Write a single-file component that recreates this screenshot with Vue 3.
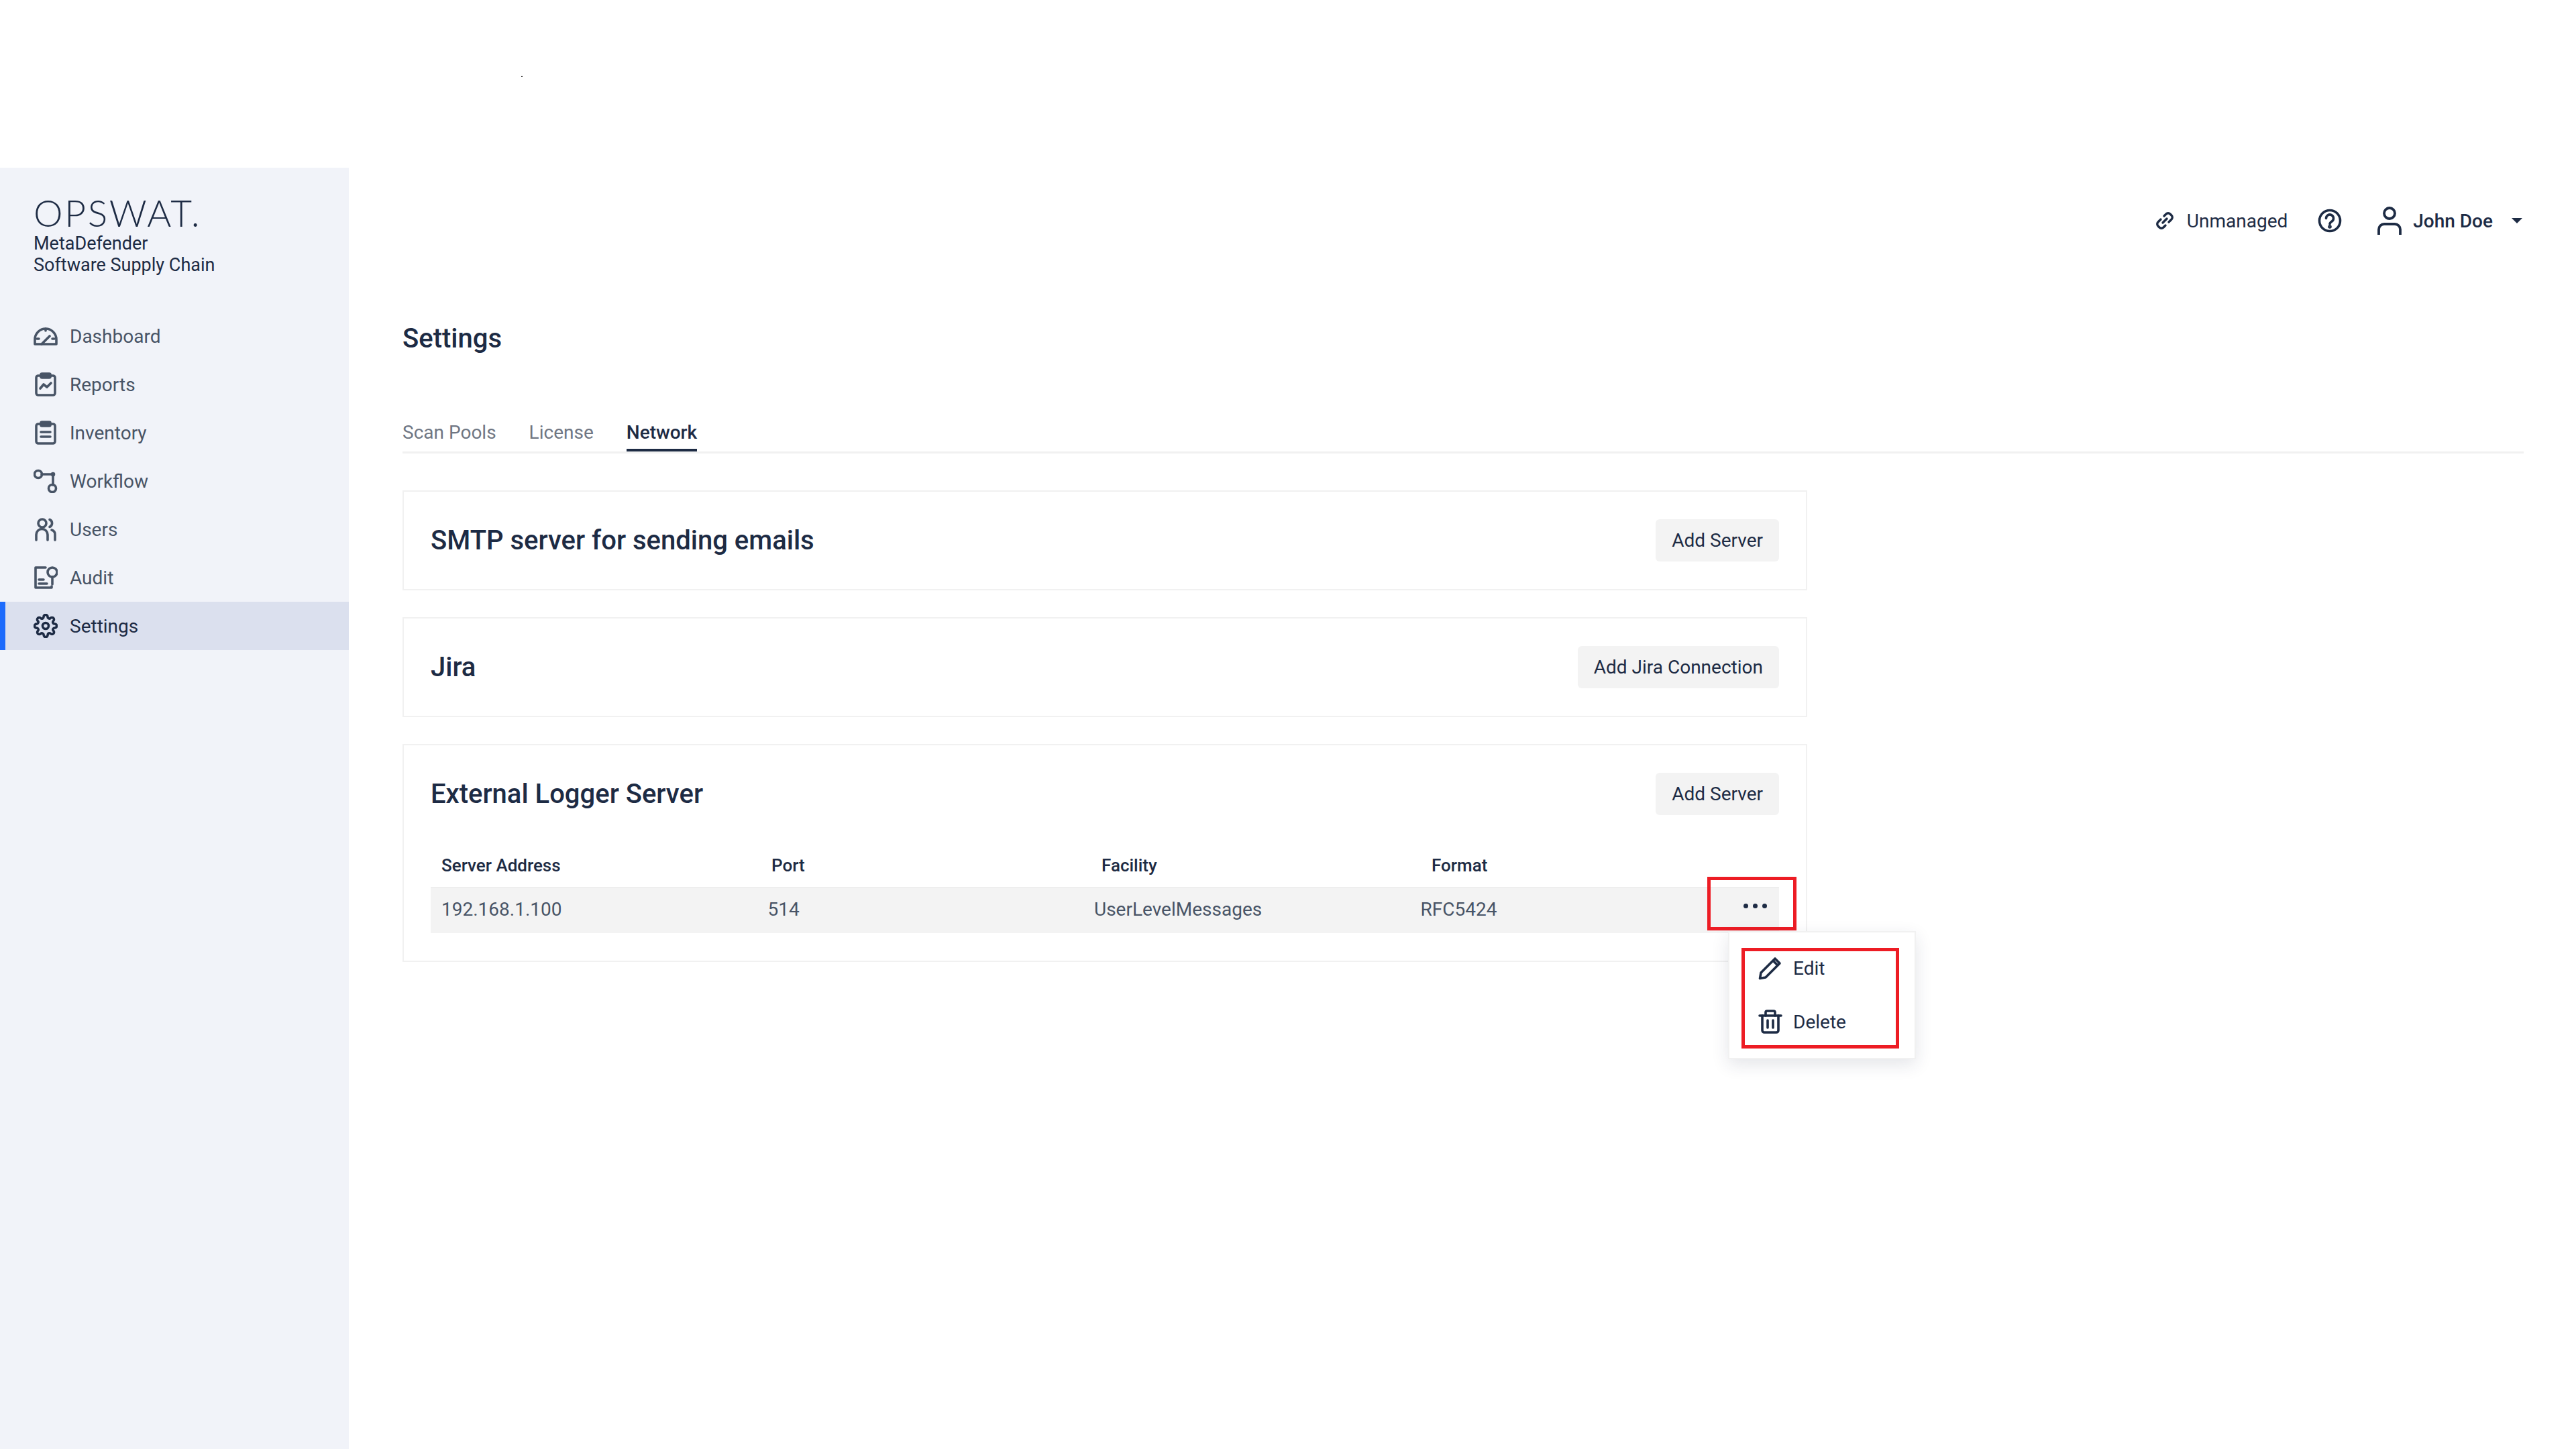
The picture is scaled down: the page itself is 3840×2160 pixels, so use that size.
<template>
  <div class="page">
    <span class="speck"></span>
    <aside class="sidebar">
      <div class="brand">
        <div class="logo">OPSWAT.</div>
        <div class="product">MetaDefender<br />Software Supply Chain</div>
      </div>
      <nav class="nav">
        <a v-for="item in navItems" :key="item.label" class="nav-item" :class="{ active: item.active }">
          <svg class="nav-icon" viewBox="0 0 36 36" fill="none" stroke="currentColor" stroke-width="3.6" stroke-linecap="round" stroke-linejoin="round" v-html="item.icon"></svg>
          <span>{{ item.label }}</span>
        </a>
      </nav>
    </aside>

    <main class="main">
      <header class="topbar">
        <span class="status">
          <svg class="link-icon" viewBox="0 0 26 26" fill="none" stroke="currentColor" stroke-width="3.4" stroke-linecap="round">
            <path d="M12 6 15 3a4.200 4.200 0 0 1 6 0l2 2a4.200 4.200 0 0 1 0 6L19 15" />
            <path d="M14 20 11 23a4.200 4.200 0 0 1-6 0l-2-2a4.200 4.200 0 0 1 0-6L7 11" />
            <path d="M10 16 16 10" />
          </svg>
          Unmanaged
        </span>
        <svg class="help-icon" viewBox="0 0 36 36" fill="none" stroke="currentColor" stroke-width="3.6" stroke-linecap="round">
          <circle cx="18" cy="18" r="15.500" />
          <path d="M12.500 14.500a5.500 5.500 0 1 1 8.600 4.500c-2 1.300-3.100 2.300-3.100 4" />
          <circle cx="18" cy="27" r="1" fill="currentColor" />
        </svg>
        <svg class="user-icon" viewBox="0 0 36 42" fill="none" stroke="currentColor" stroke-width="3.8">
          <circle cx="18" cy="10" r="8" />
          <path d="M2 42v-8a8 8 0 0 1 8-8h16a8 8 0 0 1 8 8v8" />
        </svg>
        <span class="user-name">John Doe</span>
        <span class="caret"></span>
      </header>

      <h1 class="page-title">Settings</h1>

      <div class="tabs">
        <a v-for="tab in tabs" :key="tab" class="tab" :class="{ current: tab === 'Network' }">{{ tab }}</a>
      </div>

      <section class="card">
        <div class="card-head">
          <h2>SMTP server for sending emails</h2>
          <button class="btn">Add Server</button>
        </div>
      </section>

      <section class="card">
        <div class="card-head">
          <h2>Jira</h2>
          <button class="btn">Add Jira Connection</button>
        </div>
      </section>

      <section class="card">
        <div class="card-head">
          <h2>External Logger Server</h2>
          <button class="btn">Add Server</button>
        </div>
        <div class="table">
          <div class="table-head">
            <span>Server Address</span>
            <span>Port</span>
            <span>Facility</span>
            <span>Format</span>
          </div>
          <div class="table-row">
            <span>192.168.1.100</span>
            <span>514</span>
            <span>UserLevelMessages</span>
            <span>RFC5424</span>
            <span class="dots"><i></i><i></i><i></i></span>
            <span class="mark mark-dots"></span>
            <div class="menu">
              <div class="menu-item">
                <svg class="menu-icon" viewBox="0 0 36 36" fill="none" stroke="currentColor" stroke-width="3.6" stroke-linejoin="round">
                  <path d="M2.500 33.500 4 25 25 4l7 7-21 21z" />
                  <path d="M22 7l7 7" />
                </svg>
                <span>Edit</span>
              </div>
              <div class="menu-item">
                <svg class="menu-icon" viewBox="0 0 36 36" fill="none" stroke="currentColor" stroke-width="3.6" stroke-linecap="round" stroke-linejoin="round">
                  <path d="M2 9h32" />
                  <path d="M11 9V4a2 2 0 0 1 2-2h10a2 2 0 0 1 2 2v5" />
                  <path d="M6 9v22a3 3 0 0 0 3 3h18a3 3 0 0 0 3-3V9" />
                  <path d="M14 16v11M22 16v11" />
                </svg>
                <span>Delete</span>
              </div>
              <span class="mark mark-menu"></span>
            </div>
          </div>
        </div>
      </section>
    </main>
  </div>
</template>

<script setup>
const tabs = ['Scan Pools', 'License', 'Network']

const navItems = [
  {
    label: 'Dashboard',
    icon: '<path d="M2 30v-7a16 16 0 0 1 32 0v7z"/><path d="M18 7v3M5 22h3M28 22h3M12 30l12-12"/>'
  },
  {
    label: 'Reports',
    icon: '<rect x="4" y="5" width="28" height="29" rx="3"/><rect x="11" y="2" width="14" height="6" rx="1.500" fill="currentColor"/><path d="M10 24l5-6 5 4 6-6"/>'
  },
  {
    label: 'Inventory',
    icon: '<rect x="4" y="5" width="28" height="29" rx="3"/><rect x="11" y="2" width="14" height="6" rx="1.500" fill="currentColor"/><path d="M11 17h14M11 24h14"/>'
  },
  {
    label: 'Workflow',
    icon: '<circle cx="7" cy="8" r="5.500"/><path d="M12 8h17M29 8v16"/><circle cx="29" cy="8" r="1.500" fill="currentColor"/><circle cx="28" cy="29" r="5.500"/>'
  },
  {
    label: 'Users',
    icon: '<circle cx="13" cy="9" r="6"/><path d="M24 3.500a6 6 0 0 1 0 11"/><path d="M4 34V26a8 8 0 0 1 17 0v8M27 19a7 7 0 0 1 5 7v8"/>'
  },
  {
    label: 'Audit',
    icon: '<path d="M18 3H3v30h24v-2"/><circle cx="28" cy="10" r="7"/><path d="M28 17v11M8 21h7M8 27h12"/>'
  },
  {
    label: 'Settings',
    active: true,
    icon: '<g transform="scale(1.500)" stroke-width="2.400"><circle cx="12" cy="12" r="3"/><path d="M19.400 15a1.650 1.650 0 0 0 .33 1.820l.06.06a2 2 0 0 1 0 2.830 2 2 0 0 1-2.830 0l-.06-.06a1.650 1.650 0 0 0-1.820-.33 1.650 1.650 0 0 0-1 1.510V21a2 2 0 0 1-2 2 2 2 0 0 1-2-2v-.09A1.650 1.650 0 0 0 9 19.400a1.650 1.650 0 0 0-1.820.33l-.06.06a2 2 0 0 1-2.830 0 2 2 0 0 1 0-2.830l.06-.06a1.650 1.650 0 0 0 .33-1.820 1.650 1.650 0 0 0-1.510-1H3a2 2 0 0 1-2-2 2 2 0 0 1 2-2h.09A1.650 1.650 0 0 0 4.600 9a1.650 1.650 0 0 0-.33-1.820l-.06-.06a2 2 0 0 1 0-2.830 2 2 0 0 1 2.830 0l.06.06a1.650 1.650 0 0 0 1.820.33H9a1.650 1.650 0 0 0 1-1.510V3a2 2 0 0 1 2-2 2 2 0 0 1 2 2v.09a1.650 1.650 0 0 0 1 1.510 1.650 1.650 0 0 0 1.820-.33l.06-.06a2 2 0 0 1 2.830 0 2 2 0 0 1 0 2.830l-.06.06a1.650 1.650 0 0 0-.33 1.820V9a1.650 1.650 0 0 0 1.510 1H21a2 2 0 0 1 2 2 2 2 0 0 1-2 2h-.09a1.650 1.650 0 0 0-1.510 1z"/></g>'
  }
]
</script>

<style>
html, body {
  background: #fff;
}
</style>

<style scoped>
.page {
  position: relative;
  display: flex;
  width: 3840px;
  height: 2160px;
  padding-top: 250px;
  box-sizing: border-box;
  font-family: Roboto, "Liberation Sans", sans-serif;
  color: #1d2b44;
  overflow: hidden;
}

.speck {
  position: absolute;
  left: 777px;
  top: 113px;
  width: 2px;
  height: 2px;
  background: #444;
}

.sidebar {
  width: 520px;
  flex: none;
  background: #f1f3f9;
}

.brand {
  padding: 42px 0 0 50px;
}

.logo {
  font-family: Lato, sans-serif;
  font-weight: 300;
  font-size: 55px;
  line-height: 50px;
  letter-spacing: 2.7px;
  color: #1d2b44;
}

.product {
  margin-top: 5px;
  font-size: 27px;
  line-height: 32px;
}

.nav {
  margin-top: 54px;
}

.nav-item {
  display: flex;
  align-items: center;
  gap: 18px;
  height: 72px;
  padding-left: 50px;
  font-size: 28px;
  color: #485466;
}

.nav-item.active {
  padding-left: 42px;
  border-left: 8px solid #1d6bfc;
  background: #dbe0ee;
  color: #1d2b44;
}

.nav-icon {
  width: 36px;
  height: 36px;
  flex: none;
}

.main {
  flex: 1;
  padding: 0 78px 0 80px;
  min-width: 0;
}

.topbar {
  display: flex;
  align-items: center;
  justify-content: flex-end;
  height: 158px;
  font-size: 28px;
}

.status {
  display: flex;
  align-items: center;
  gap: 20px;
}

.link-icon {
  width: 26px;
  height: 26px;
}

.help-icon {
  width: 36px;
  height: 36px;
  margin-left: 45px;
}

.user-icon {
  width: 36px;
  height: 42px;
  margin-left: 53px;
}

.user-name {
  margin-left: 17px;
  font-weight: 500;
}

.caret {
  margin-left: 28px;
  margin-right: 2px;
  border-left: 8px solid transparent;
  border-right: 8px solid transparent;
  border-top: 8px solid #1d2b44;
}

.page-title {
  margin: 69px 0 0;
  font-size: 40px;
  line-height: 56px;
  font-weight: 500;
}

.tabs {
  display: flex;
  gap: 49px;
  margin-top: 81px;
  height: 59px;
  border-bottom: 3px solid #f1f1f1;
  font-size: 28px;
  color: #6f7683;
}

.tab {
  height: 59px;
  line-height: 62px;
  box-sizing: border-box;
}

.tab.current {
  color: #1d2b44;
  font-weight: 500;
  border-bottom: 4px solid #1d2b44;
}

.card {
  width: 2094px;
  box-sizing: border-box;
  margin-top: 40px;
  padding: 41px 40px;
  border: 2px solid #f1f1f1;
}

.tabs + .card {
  margin-top: 55px;
}

.card-head {
  display: flex;
  align-items: center;
  justify-content: space-between;
  height: 63px;
}

.card-head h2 {
  margin: 0;
  font-size: 40px;
  font-weight: 500;
}

.btn {
  height: 63px;
  padding: 0 24px;
  border: 0;
  border-radius: 6px;
  background: #f3f3f3;
  color: #1d2b44;
  font-family: inherit;
  font-size: 28px;
}

.table {
  margin-top: 42px;
}

.table-head {
  display: grid;
  grid-template-columns: repeat(4, 492px);
  padding-left: 16px;
  height: 65px;
  align-items: center;
  font-size: 26px;
  font-weight: 500;
}

.table-row {
  position: relative;
  display: grid;
  grid-template-columns: repeat(4, 486.5px) 1fr;
  align-items: center;
  height: 69px;
  box-sizing: border-box;
  padding: 0 0 4px 16px;
  background: #f3f3f3;
  border-top: 2px solid #eee;
  font-size: 28px;
  color: #485466;
}

.dots {
  display: flex;
  gap: 7px;
  position: absolute;
  left: 1957px;
  top: 23px;
}

.dots i {
  width: 7px;
  height: 7px;
  border-radius: 50%;
  background: #1d2b44;
}

.mark {
  position: absolute;
  border: 5px solid #ed1c24;
  box-sizing: border-box;
  pointer-events: none;
}

.mark-dots {
  left: 1903px;
  top: -17px;
  width: 133px;
  height: 80px;
}

.menu {
  position: absolute;
  left: 1934px;
  top: 64px;
  width: 280px;
  height: 191px;
  box-sizing: border-box;
  padding-top: 13px;
  background: #fff;
  border: 2px solid #f1f1f1;
  box-shadow: 0 8px 24px rgba(30, 40, 70, 0.12);
  color: #1d2b44;
  z-index: 2;
}

.menu-item {
  display: flex;
  align-items: center;
  gap: 16px;
  height: 80px;
  padding-left: 43px;
  font-size: 28px;
}

.menu-icon {
  width: 36px;
  height: 36px;
}

.mark-menu {
  left: 18px;
  top: 23px;
  width: 235px;
  height: 150px;
}
</style>
